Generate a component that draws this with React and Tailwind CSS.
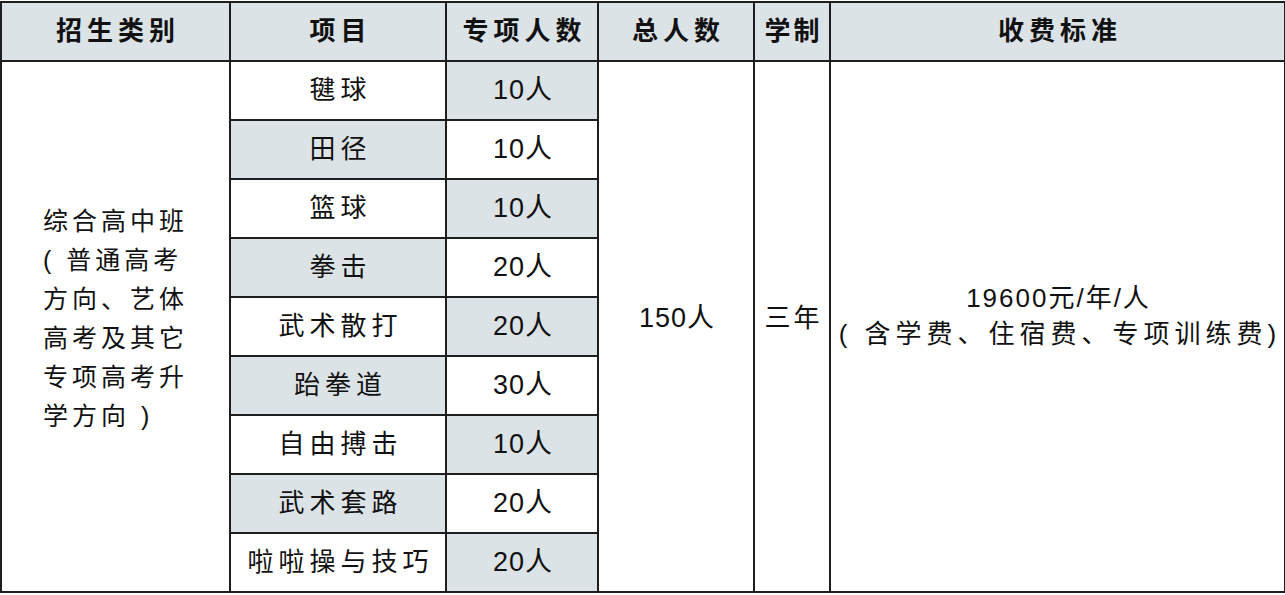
import React from "react";

const rows = [
  { name: "毽球", count: "10人" },
  { name: "田径", count: "10人" },
  { name: "篮球", count: "10人" },
  { name: "拳击", count: "20人" },
  { name: "武术散打", count: "20人" },
  { name: "跆拳道", count: "30人" },
  { name: "自由搏击", count: "10人" },
  { name: "武术套路", count: "20人" },
  { name: "啦啦操与技巧", count: "20人" },
];

const cell = "border-2 border-[#1e1e1e] text-center align-middle p-0";

const App = () => {
  return (
    <div className="w-[1285px] h-[595px] bg-white pt-[1px] font-['Liberation_Sans','Noto_Sans_CJK_SC',sans-serif] text-[#111]">
      <table className="w-[1284px] table-fixed border-collapse">
        <colgroup>
          <col className="w-[229px]" />
          <col className="w-[216px]" />
          <col className="w-[152px]" />
          <col className="w-[156px]" />
          <col className="w-[76px]" />
          <col className="w-[455px]" />
        </colgroup>
        <thead>
          <tr className="h-[59px] bg-[#dce3e6] text-[26px] font-bold tracking-[5px]">
            <th className={cell}>
              <span className="pl-[5px]">招生类别</span>
            </th>
            <th className={cell}>
              <span className="pl-[5px]">项目</span>
            </th>
            <th className={cell}>
              <span className="pl-[5px]">专项人数</span>
            </th>
            <th className={cell}>
              <span className="pl-[5px]">总人数</span>
            </th>
            <th className={cell}>
              <span className="pl-[3px] tracking-[3px]">学制</span>
            </th>
            <th className={cell}>
              <span className="pl-[5px]">收费标准</span>
            </th>
          </tr>
        </thead>
        <tbody className="text-[26px]">
          {rows.map((row, i) => (
            <tr key={row.name} className="h-[59px]">
              {i === 0 && (
                <td rowSpan={9} className={cell}>
                  <div className="inline-block text-left text-[25px] tracking-[4px] leading-[39px] -mt-[16px]">
                    综合高中班
                    <br />( 普通高考
                    <br />
                    方向、艺体
                    <br />
                    高考及其它
                    <br />
                    专项高考升
                    <br />
                    学方向 )
                  </div>
                </td>
              )}
              <td className={i % 2 === 0 ? cell + " bg-white" : cell + " bg-[#dce3e6]"}>
                <span className="pl-[5px] tracking-[5px]">{row.name}</span>
              </td>
              <td className={i % 2 === 0 ? cell + " bg-[#dce3e6]" : cell + " bg-white"}>
                <span className="pl-[2px] tracking-[1px] text-[27px]">{row.count}</span>
              </td>
              {i === 0 && (
                <>
                  <td rowSpan={9} className={cell}>
                    <span className="relative -top-[8px] pl-[2px] tracking-[1px] text-[27px]">150人</span>
                  </td>
                  <td rowSpan={9} className={cell}>
                    <span className="relative -top-[8px] pl-[3px] tracking-[3px]">三年</span>
                  </td>
                  <td rowSpan={9} className={cell}>
                    <div className="leading-[36px] -mt-[22px] whitespace-nowrap tracking-[2px] pl-[2px]">
                      19600元/年/人
                    </div>
                    <div className="leading-[36px] whitespace-nowrap tracking-[5px] pl-[5px]">
                      ( 含学费、住宿费、专项训练费)
                    </div>
                  </td>
                </>
              )}
            </tr>
          ))}
        </tbody>
      </table>
    </div>
  );
};

export default App;
